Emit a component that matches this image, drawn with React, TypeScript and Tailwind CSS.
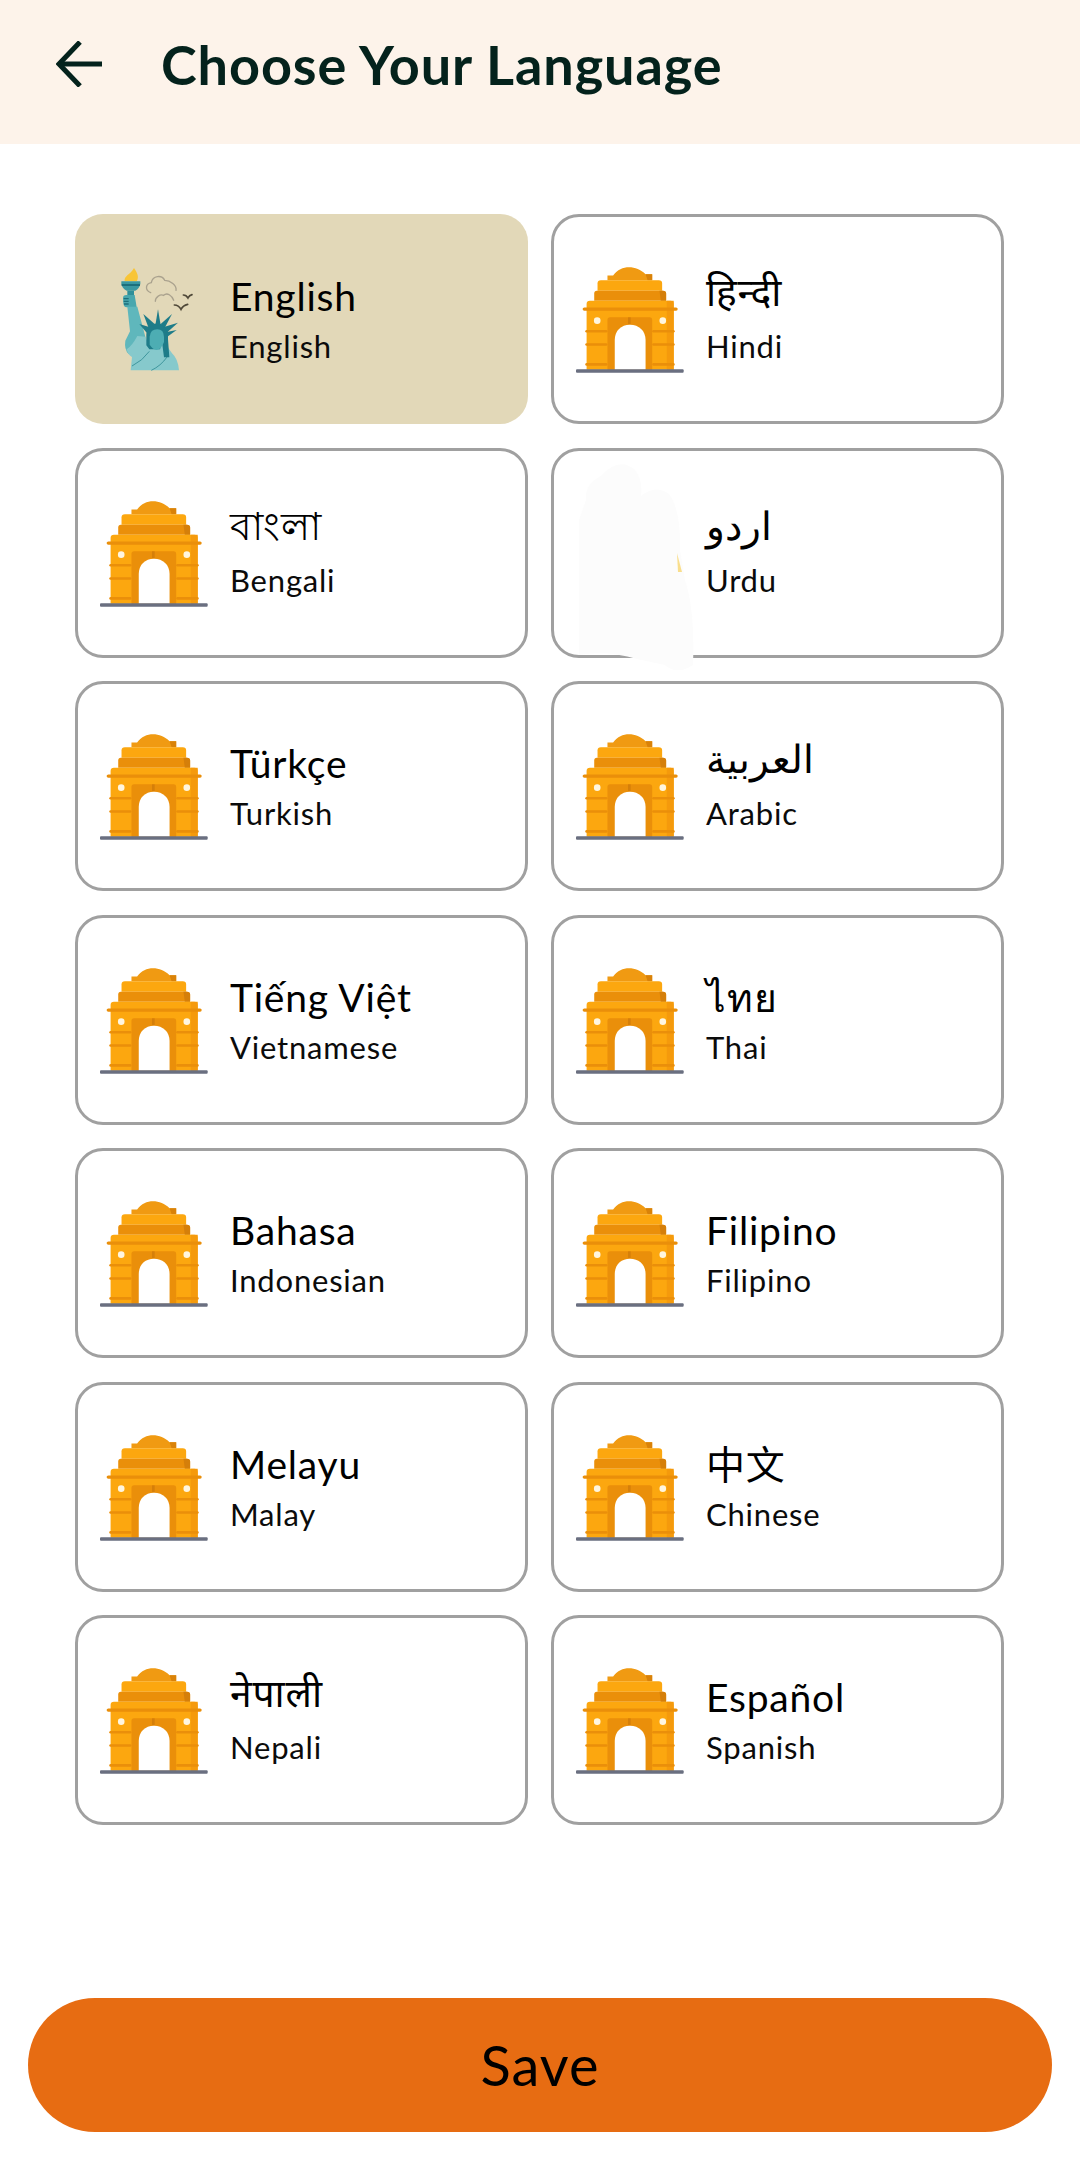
import React from 'react';

type Language = {
  name: string;
  label: string;
  selected?: boolean;
  hidden?: boolean;
  raised?: boolean;
};

const languages: Language[] = [
  { name: 'English', label: 'English', selected: true },
  { name: 'हिन्दी', label: 'Hindi', raised: true },
  { name: 'বাংলা', label: 'Bengali', raised: true },
  { name: 'اردو', label: 'Urdu', hidden: true, raised: true },
  { name: 'Türkçe', label: 'Turkish' },
  { name: 'العربية', label: 'Arabic', raised: true },
  { name: 'Tiếng Việt', label: 'Vietnamese' },
  { name: 'ไทย', label: 'Thai' },
  { name: 'Bahasa', label: 'Indonesian' },
  { name: 'Filipino', label: 'Filipino' },
  { name: 'Melayu', label: 'Malay' },
  { name: '中文', label: 'Chinese' },
  { name: 'नेपाली', label: 'Nepali', raised: true },
  { name: 'Español', label: 'Spanish' },
];

const BackArrow = () => (
  <svg viewBox="0 0 46 46" className="w-[46px] h-[46px] shrink-0" fill="none" stroke="#04221c" strokeWidth="5">
    <path d="M24 1 L3 23 L24 45" strokeLinejoin="miter" />
    <path d="M4 23 H46" />
  </svg>
);

const GateIcon = () => (
  <svg viewBox="30 30 326 330" className="w-[108px] h-[110px] shrink-0">
    <path d="M125 78 V64 H142 C155 46 172 39 190 39 C208 39 226 46 240 60 H260 V78 Z" fill="#f09a12" />
    <path d="M240 60 H260 V78 H246 Z" fill="#d98209" />
    <path d="M95 110 V88 Q95 78 105 78 H280 Q290 78 290 88 V110 Z" fill="#fca70f" />
    <path d="M85 140 V118 Q85 110 93 110 H292 Q302 110 302 118 V140 Z" fill="#ea8f0a" />
    <path d="M282 110 H292 Q302 110 302 118 V140 H286 Z" fill="#d57f0a" />
    <path d="M62 348 V150 Q62 140 72 140 H315 Q325 140 325 150 V348 Z" fill="#fca70f" />
    <rect x="304" y="140" width="21" height="208" fill="#f59a0c" />
    <rect x="50" y="160" width="287" height="10" rx="5" fill="#ea8f0a" />
    <path d="M125 348 V198 Q125 190 133 190 H252 Q260 190 260 198 V348 Z" fill="#ea8f0a" />
    <rect x="187" y="190" width="8" height="20" fill="#d57f0a" />
    <path d="M147 348 V258 C147 230 166 212 193 212 C220 212 240 230 240 258 V348 Z" fill="#ffffff" />
    <circle cx="94" cy="200" r="10" fill="#fff6e0" />
    <circle cx="292" cy="200" r="10" fill="#fff6e0" />
    <g fill="#ea8f0a">
      <rect x="58" y="228" width="67" height="8" rx="4" />
      <rect x="58" y="268" width="67" height="8" rx="4" />
      <rect x="58" y="328" width="67" height="8" rx="4" />
      <rect x="260" y="228" width="68" height="8" rx="4" />
      <rect x="260" y="268" width="68" height="8" rx="4" />
      <rect x="260" y="328" width="68" height="8" rx="4" />
    </g>
    <rect x="30" y="347" width="325" height="10" rx="3" fill="#6a6f80" />
  </svg>
);

const LibertyIcon = () => (
  <svg viewBox="0 0 255 345" className="w-[85px] h-[115px] shrink-0">
    <path d="M38 57 C35 42 55 38 66 18 C76 32 82 45 74 58 Z" fill="#f8c537" />
    <path d="M28 58 H85 V66 Q82 80 70 86 H44 Q31 80 28 66 Z" fill="#3a98a1" />
    <rect x="29" y="66" width="55" height="6" fill="#1c6f7c" />
    <rect x="46" y="86" width="20" height="14" fill="#2f8f99" />
    <path d="M33 108 Q33 99 43 99 H68 L74 136 H44 Q35 136 34 124 Z" fill="#49a7ae" />
    <path d="M35 110 H50 M35 118 H50 M36 126 H50" stroke="#1c6f7c" strokeWidth="4" />
    <path d="M46 134 H76 L102 232 L96 276 H50 Q36 262 40 236 L54 208 Z" fill="#5fb7bc" />
    <path d="M44 262 Q60 252 76 222 L100 224 L118 262 L156 240 L180 274 Q198 290 201 325 H56 L60 285 Q48 280 44 262 Z" fill="#86c9cc" />
    <path d="M60 312 Q92 296 112 268 M118 325 Q146 312 166 284" stroke="#3f969d" strokeWidth="3" fill="none" />
    <path d="M103 250 V216 Q105 186 136 184 Q166 186 168 216 V232 L172 286 H156 L150 240 L144 262 L112 262 Z" fill="#1e7c89" />
    <path d="M113 248 V224 Q115 202 136 202 Q155 202 156 224 V240 Q148 262 134 264 Q122 262 113 248 Z" fill="#4dadb3" />
    <g fill="#1e7c89">
      <path d="M130 190 L138 142 L146 190 Z" />
      <path d="M110 198 L94 156 L128 186 Z" />
      <path d="M146 186 L180 156 L158 198 Z" />
      <path d="M104 212 L82 186 L114 196 Z" />
      <path d="M158 194 L198 182 L164 212 Z" />
      <path d="M164 210 L194 204 L166 224 Z" />
    </g>
    <g fill="none" stroke="#aaa28e" strokeWidth="4" strokeLinecap="round">
      <path d="M116 92 C98 85 100 65 118 62 C122 40 150 38 158 55 C175 55 195 70 192 85" />
      <path d="M130 118 C130 105 145 95 155 100 C165 90 180 100 185 115" />
    </g>
    <g fill="none" stroke="#4f4838" strokeWidth="5" strokeLinecap="round">
      <path d="M187 129 Q200 129 207 142 Q213 130 227 127" />
      <path d="M214 99 Q223 99 228 108 Q232 100 240 98" />
    </g>
  </svg>
);

const HiddenIconSmear = () => (
  <svg viewBox="0 0 120 210" className="absolute left-[23px] top-[9px] w-[120px] h-[210px]">
    <path d="M2 60 L9 40 Q7 25 24 16 Q42 -4 58 10 Q66 20 64 36 Q78 24 92 34 Q104 50 103 90 L108 120 Q118 150 116 205 Q100 216 88 205 L60 199 Q30 190 2 195 Z" fill="#fcfcfc" />
    <path d="M100 93 L105 112 L101 112 Z" fill="#f9de8c" />
  </svg>
);

const LanguageCard = ({ language }: { language: Language }) => (
  <div
    className={`relative flex items-center h-[210px] rounded-[28px] ${
      language.selected ? 'bg-[#e2d8b8] pl-[25px]' : 'border-[3px] border-[#a0a0a0] bg-white pl-[22px]'
    }`}
  >
    <div className="w-[108px] flex justify-center shrink-0">
      {language.selected ? <LibertyIcon /> : language.hidden ? <div className="w-[108px] h-[110px]" /> : <GateIcon />}
    </div>
    <div className="flex flex-col ml-[22px]">
      <span
        className={`text-[39px] leading-[48px] tracking-[0.8px] text-black ${
          language.raised ? '-translate-y-[6px]' : '-translate-y-[1px]'
        }`}
      >
        {language.name}
      </span>
      <span className="text-[31px] leading-[38px] tracking-[0.8px] mt-[6px] text-[#0b0b0b]">{language.label}</span>
    </div>
    {language.hidden && <HiddenIconSmear />}
  </div>
);

export default function App() {
  return (
    <div className="flex flex-col h-[2160px] bg-white font-['Lato','Noto_Sans','Noto_Sans_CJK_SC',sans-serif]">
      <header className="flex items-center h-[144px] bg-[#fdf3ea] pl-[56px] pb-[16px] text-[#04221c]">
        <BackArrow />
        <h1 className="ml-[59px] text-[54px] tracking-[0.9px] font-bold">Choose Your Language</h1>
      </header>
      <main className="grid grid-cols-2 gap-x-[23px] gap-y-[23.5px] pl-[75px] pr-[76px] pt-[70px]">
        {languages.map((language) => (
          <LanguageCard key={language.label} language={language} />
        ))}
      </main>
      <footer className="mt-auto px-[28px] pb-[28px]">
        <button className="w-full h-[134px] rounded-full bg-[#e76c12] text-[56px] tracking-[1px] text-black">Save</button>
      </footer>
    </div>
  );
}
